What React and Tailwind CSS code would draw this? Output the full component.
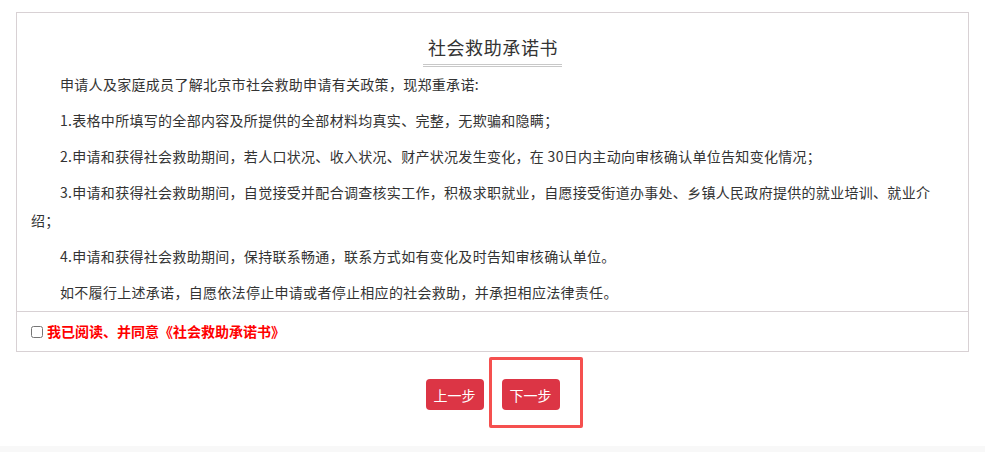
import React from "react";

const paras = [
  "申请人及家庭成员了解北京市社会救助申请有关政策，现郑重承诺:",
  "1.表格中所填写的全部内容及所提供的全部材料均真实、完整，无欺骗和隐瞒；",
  "2.申请和获得社会救助期间，若人口状况、收入状况、财产状况发生变化，在 30日内主动向审核确认单位告知变化情况；",
  "3.申请和获得社会救助期间，自觉接受并配合调查核实工作，积极求职就业，自愿接受街道办事处、乡镇人民政府提供的就业培训、就业介绍；",
  "4.申请和获得社会救助期间，保持联系畅通，联系方式如有变化及时告知审核确认单位。",
  "如不履行上述承诺，自愿依法停止申请或者停止相应的社会救助，并承担相应法律责任。",
];

export default function App() {
  return (
    <div
      className="w-full h-[452px] bg-white flex flex-col text-[#333]"
      style={{ fontFamily: '"Noto Sans CJK SC", "Noto Sans", sans-serif' }}
    >
      <div className="px-[16px] pt-[12px]">
        <div className="border border-[#d8d1d4]">
          <div className="flex justify-center pt-[20px]">
            <div className="pl-[5px] pr-[4px] pb-[3px] text-[18px] tracking-[0.6px] leading-[28px] text-[#333] border-b-[3px] border-double border-[#c8c8c8]">
              社会救助承诺书
            </div>
          </div>
          <div className="px-[14px] pt-[3px] pb-[5px] text-[14px] tracking-[0.3px] leading-[28px]">
            {paras.map((p, i) => (
              <p
                key={i}
                className={`indent-[29px] ${i < paras.length - 1 ? "mb-[8px]" : ""}`}
              >
                {p}
              </p>
            ))}
          </div>
          <div className="border-t border-[#d8d1d4] h-[40px] px-[14px] flex items-center">
            <input
              type="checkbox"
              className="w-[12px] h-[12px] mr-[4px] mt-[1px]"
            />
            <span className="text-[14px] font-bold text-[#ff0000]">
              我已阅读、并同意《社会救助承诺书》
            </span>
          </div>
        </div>
      </div>
      <div className="flex justify-center gap-[18px] pt-[27px]">
        <button className="bg-[#dc3545] text-white text-[14px] leading-[20px] px-[8px] py-[5px] rounded-[4px] h-[31px]">
          上一步
        </button>
        <div className="relative">
          <button className="bg-[#dc3545] text-white text-[14px] leading-[20px] px-[8px] py-[5px] rounded-[4px] h-[31px]">
            下一步
          </button>
          <div className="absolute -left-[13px] -right-[23px] -top-[22px] -bottom-[18px] border-[3px] border-[#f5504f] rounded-[2px] pointer-events-none" />
        </div>
      </div>
      <div className="flex-1" />
      <div className="h-[6px] bg-[#f8f8f8]" />
    </div>
  );
}
